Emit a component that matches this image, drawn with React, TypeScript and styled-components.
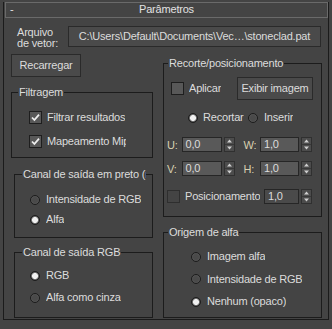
import React from 'react'
import styled, { createGlobalStyle } from 'styled-components'

const GlobalStyle = createGlobalStyle`
  html, body {
    margin: 0;
    padding: 0;
    background: #444444;
  }
  body {
    font-family: 'Liberation Sans', Arial, sans-serif;
    font-size: 11px;
    letter-spacing: -0.2px;
    color: #dcdcdc;
  }
`

const Rollout = styled.div`
  width: 332px;
  height: 329px;
  box-sizing: border-box;
  padding: 10px 0 0 3px;
  background: #444444;
`

const Frame = styled.div`
  width: 326px;
  height: 318px;
  box-sizing: border-box;
  border: 1px solid #1b1b1b;
  border-top: none;
`

const TitleBar = styled.div`
  margin: -8px 0 0 1px;
  width: 323px;
  height: 16px;
  box-sizing: border-box;
  border: 1px solid #6a6a6a;
  display: grid;
  grid-template-columns: 1fr auto 1fr;
  line-height: 11px;
  padding-top: 1px;
  color: #e2e2e2;
`

const Collapse = styled.span`
  padding-left: 4px;
`

const FileRow = styled.div`
  display: flex;
  align-items: center;
  height: 21px;
  margin: 8px 0 0 13px;
`

const FileLabel = styled.div`
  width: 51px;
  line-height: 11px;
  padding-top: 2px;
`

const Button = styled.div<{ $w: number; $h: number }>`
  width: ${p => p.$w}px;
  height: ${p => p.$h}px;
  box-sizing: border-box;
  border: 1px solid #2a2a2a;
  background: #4a4a4a;
  display: flex;
  align-items: center;
  justify-content: center;
  white-space: nowrap;
  overflow: hidden;
  padding-bottom: 2px;
`

const Columns = styled.div`
  display: flex;
  align-items: flex-start;
  margin-left: 7px;
`

const LeftCol = styled.div`
  width: 142px;
  margin-top: 7px;
  display: flex;
  flex-direction: column;
`

const RightCol = styled.div`
  width: 159px;
  margin: 10px 0 0 10px;
  display: flex;
  flex-direction: column;
`

const Group = styled.fieldset<{ $h: number; $top: number; $inset?: number }>`
  box-sizing: border-box;
  height: ${p => p.$h}px;
  margin: ${p => p.$top}px 0 0 ${p => p.$inset || 0}px;
  padding: 0;
  min-width: 0;
  border: 1px solid #1c1c1c;
`

const Legend = styled.legend<{ $offset: number; $max?: number }>`
  margin-left: ${p => p.$offset}px;
  padding: 0 1px;
  line-height: 12px;
  white-space: nowrap;
  overflow: hidden;
  max-width: ${p => (p.$max ? `${p.$max}px` : 'none')};
`

const GroupBody = styled.div<{ $top: number; $left: number; $gap: number }>`
  display: flex;
  flex-direction: column;
  gap: ${p => p.$gap}px;
  padding: ${p => p.$top}px 0 0 ${p => p.$left}px;
`

const OptionRow = styled.div<{ $w?: number }>`
  display: flex;
  align-items: center;
  height: 13px;
  width: ${p => (p.$w ? `${p.$w}px` : 'auto')};
  white-space: nowrap;
`

const OptionLabel = styled.span<{ $gap: number; $max?: number }>`
  margin-left: ${p => p.$gap}px;
  line-height: 13px;
  overflow: hidden;
  max-width: ${p => (p.$max ? `${p.$max}px` : 'none')};
`

const Box = styled.span<{ $disabled?: boolean }>`
  flex: none;
  width: 13px;
  height: 13px;
  box-sizing: border-box;
  border: 1px solid ${p => (p.$disabled ? '#2e2e2e' : '#1e1e1e')};
  background: ${p => (p.$disabled ? '#444444' : '#585858')};
  display: flex;
  align-items: center;
  justify-content: center;
`

const Radio = styled.span<{ $on?: boolean }>`
  flex: none;
  width: 10px;
  height: 10px;
  box-sizing: border-box;
  border-radius: 50%;
  border: 1px solid #1c1c1c;
  background: ${p =>
    p.$on
      ? 'radial-gradient(circle, #f0f0f0 0 2.6px, #8a8a8a 3.2px, #4e4e4e 4px)'
      : 'radial-gradient(circle, #4a4a4a 0 2.5px, #565656 4px)'};
`

const Row = styled.div<{ $top: number; $h: number; $left?: number }>`
  display: flex;
  align-items: center;
  height: ${p => p.$h}px;
  margin-top: ${p => p.$top}px;
  padding-left: ${p => p.$left || 0}px;
  white-space: nowrap;
`

const AxisLabel = styled.span<{ $w: number }>`
  width: ${p => p.$w}px;
  color: #d8d0b0;
`

const Field = styled.div<{ $w: number; $disabled?: boolean }>`
  width: ${p => p.$w}px;
  height: 15px;
  box-sizing: border-box;
  border: 1px solid #262626;
  background: ${p => (p.$disabled ? '#4a4a4a' : '#595959')};
  padding-left: 3px;
  line-height: 13px;
`

const SpinBox = styled.span`
  flex: none;
  width: 11px;
  height: 15px;
  margin-left: 2px;
  margin-right: 9px;
  display: flex;
`

const Check = () => (
  <svg width="9" height="9" viewBox="0 0 9 9">
    <path d="M1 4.5 L3.4 7 L8 1.6" fill="none" stroke="#eeeeee" strokeWidth="1.8" />
  </svg>
)

const Spinner = () => (
  <SpinBox>
    <svg width="11" height="15" viewBox="0 0 11 15">
      <rect x="0.5" y="0.5" width="10" height="14" fill="#4c4c4c" stroke="#303030" />
      <line x1="1" y1="7.5" x2="10" y2="7.5" stroke="#383838" />
      <path d="M5.5 2.5 L8 5.5 L3 5.5 Z" fill="#cfcfcf" />
      <path d="M5.5 12.5 L8 9.5 L3 9.5 Z" fill="#cfcfcf" />
    </svg>
  </SpinBox>
)

const Spacer = styled.div`
  flex: 1;
`

const CheckOption: React.FC<{ label: string; checked?: boolean; max?: number }> = ({ label, checked, max }) => (
  <OptionRow>
    <Box>{checked && <Check />}</Box>
    <OptionLabel $gap={5} $max={max}>{label}</OptionLabel>
  </OptionRow>
)

const RadioOption: React.FC<{ label: string; on?: boolean; w?: number; gap?: number }> = ({ label, on, w, gap = 6 }) => (
  <OptionRow $w={w}>
    <Radio $on={on} />
    <OptionLabel $gap={gap}>{label}</OptionLabel>
  </OptionRow>
)

const CoordRow: React.FC<{ top: number; a: string; av: string; b: string; bv: string }> = ({ top, a, av, b, bv }) => (
  <Row $top={top} $h={15} $left={3}>
    <AxisLabel $w={15}>{a}</AxisLabel>
    <Field $w={41}>{av}</Field>
    <Spinner />
    <AxisLabel $w={17}>{b}</AxisLabel>
    <Field $w={40}>{bv}</Field>
    <Spinner />
  </Row>
)

export default function App() {
  return (
    <>
      <GlobalStyle />
      <Rollout>
        <Frame>
          <TitleBar>
            <Collapse>-</Collapse>
            <span>Parâmetros</span>
            <span />
          </TitleBar>

          <FileRow>
            <FileLabel>
              Arquivo
              <br />
              de vetor:
            </FileLabel>
            <Button $w={253} $h={21}>C:\Users\Default\Documents\Vec…\stoneclad.pat</Button>
          </FileRow>

          <Columns>
            <LeftCol>
              <Button $w={70} $h={23}>Recarregar</Button>

              <Group $h={72} $top={9}>
                <Legend $offset={6}>Filtragem</Legend>
                <GroupBody $top={13} $left={17} $gap={11}>
                  <CheckOption label="Filtrar resultados" checked max={79} />
                  <CheckOption label="Mapeamento Mip" checked max={79} />
                </GroupBody>
              </Group>

              <Group $h={70} $top={10} $inset={3}>
                <Legend $offset={7} $max={122}>Canal de saída em preto (mono)</Legend>
                <GroupBody $top={13} $left={15} $gap={7}>
                  <RadioOption label="Intensidade de RGB" />
                  <RadioOption label="Alfa" on />
                </GroupBody>
              </Group>

              <Group $h={72} $top={8} $inset={3}>
                <Legend $offset={7}>Canal de saída RGB</Legend>
                <GroupBody $top={11} $left={15} $gap={9}>
                  <RadioOption label="RGB" on />
                  <RadioOption label="Alfa como cinza" />
                </GroupBody>
              </Group>
            </LeftCol>

            <RightCol>
              <Group $h={160} $top={0}>
                <Legend $offset={4}>Recorte/posicionamento</Legend>
                <Row $top={8} $h={23} $left={7}>
                  <Box />
                  <OptionLabel $gap={5}>Aplicar</OptionLabel>
                  <Spacer />
                  <Button $w={76} $h={23}>Exibir imagem</Button>
                  <Spacer style={{ flex: 'none', width: 8 }} />
                </Row>
                <Row $top={11} $h={13} $left={24}>
                  <RadioOption label="Recortar" on w={60} gap={5} />
                  <RadioOption label="Inserir" gap={6} />
                </Row>
                <CoordRow top={13} a="U:" av="0,0" b="W:" bv="1,0" />
                <CoordRow top={9} a="V:" av="0,0" b="H:" bv="1,0" />
                <Row $top={13} $h={15} $left={3}>
                  <Box $disabled />
                  <OptionLabel $gap={5}>Posicionamento</OptionLabel>
                  <Spacer />
                  <Field $w={35} $disabled>1,0</Field>
                  <Spinner />
                </Row>
              </Group>

              <Group $h={92} $top={9}>
                <Legend $offset={4}>Origem de alfa</Legend>
                <GroupBody $top={12} $left={27} $gap={9.5}>
                  <RadioOption label="Imagem alfa" />
                  <RadioOption label="Intensidade de RGB" />
                  <RadioOption label="Nenhum (opaco)" on />
                </GroupBody>
              </Group>
            </RightCol>
          </Columns>
        </Frame>
      </Rollout>
    </>
  )
}
